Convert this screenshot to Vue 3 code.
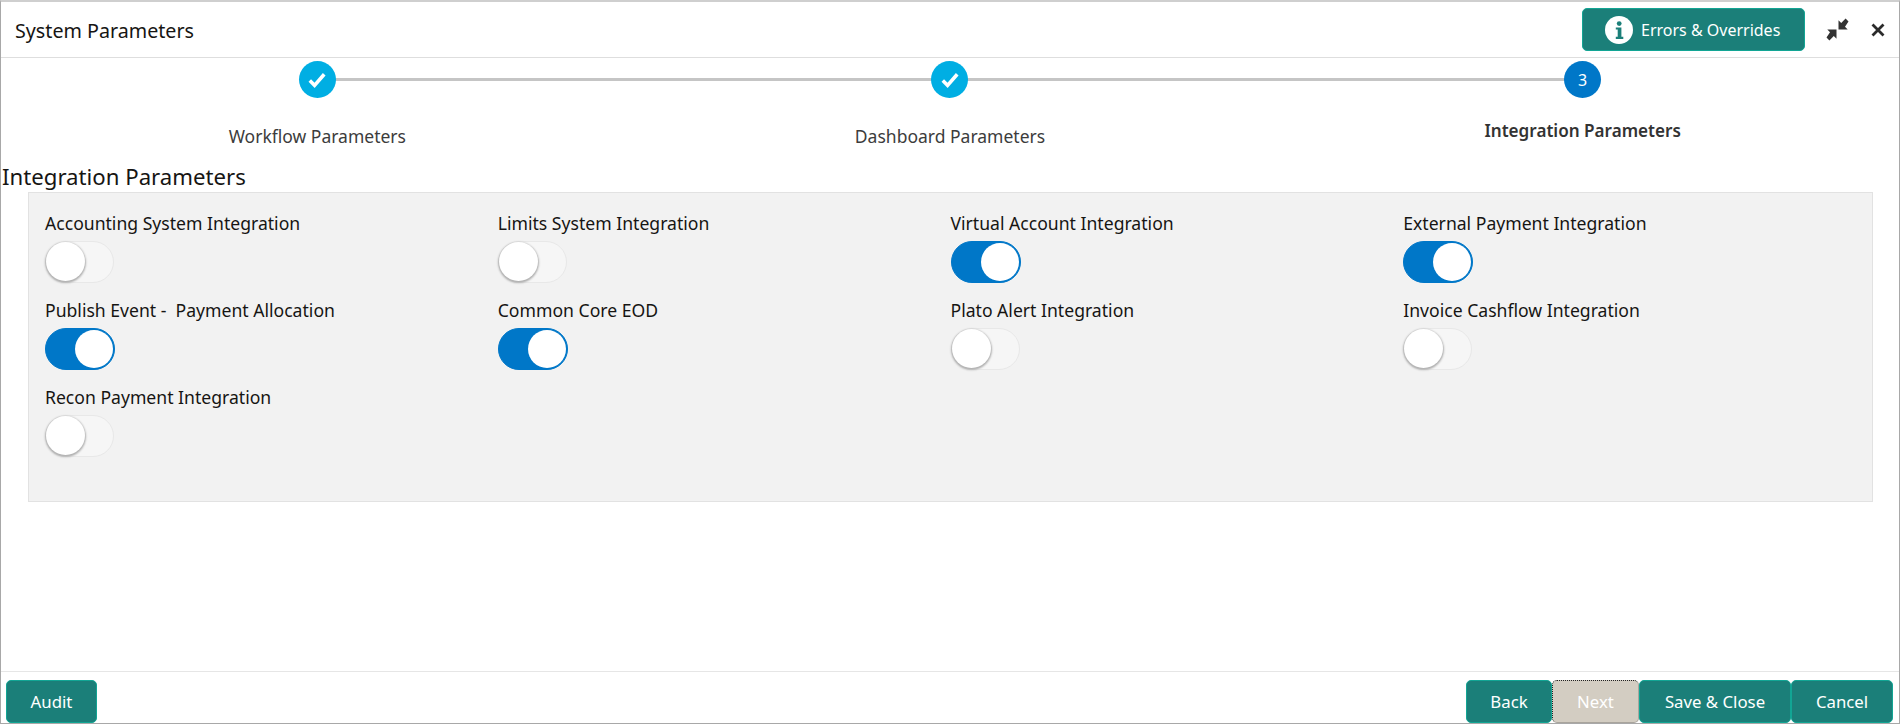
<script setup>
const steps = [
  { label: 'Workflow Parameters', done: true },
  { label: 'Dashboard Parameters', done: true },
  { label: 'Integration Parameters', done: false, num: 3 },
]
const toggles = [
  { label: 'Accounting System Integration', on: false },
  { label: 'Limits System Integration', on: false },
  { label: 'Virtual Account Integration', on: true },
  { label: 'External Payment Integration', on: true },
  { label: 'Publish Event -\u00a0 Payment Allocation', on: true },
  { label: 'Common Core EOD', on: true },
  { label: 'Plato Alert Integration', on: false },
  { label: 'Invoice Cashflow Integration', on: false },
  { label: 'Recon Payment Integration', on: false },
]
</script>

<template>
  <div class="page">
    <header class="head">
      <h1 class="title">System Parameters</h1>
      <div class="head-right">
        <button class="btn errors">
          <svg class="info" viewBox="0 0 28 28">
            <circle cx="14" cy="14" r="14" fill="#fff" />
            <circle cx="14.2" cy="7.6" r="2.4" fill="#1b7f79" />
            <path d="M10.8 11.4h5.6v9.4h1.9v2.2h-7.5v-2.2h1.9v-7.2h-1.9z" fill="#1b7f79" />
          </svg>
          Errors &amp; Overrides
        </button>
        <svg class="shrink" viewBox="0 0 23 23">
          <path d="M22.5 3.4 19.6 .5l-4.4 4.4-2.7-2.7v9.2h9.2l-2.7-2.7z" fill="#333" />
          <path d="M.5 19.6l2.9 2.9 4.4-4.4 2.7 2.7v-9.2H1.3L4 14.3z" fill="#333" />
        </svg>
        <svg class="close" viewBox="0 0 14 14">
          <path d="M1.5 1.5l11 11M12.5 1.5l-11 11" stroke="#2b2b2b" stroke-width="2.8" fill="none" />
        </svg>
      </div>
    </header>

    <section class="steps">
      <div v-for="(s, i) in steps" :key="s.label" class="step" :class="{ current: !s.done, linked: i < 2 }">
        <div class="dot" :class="s.done ? 'dot-done' : 'dot-now'">
          <svg v-if="s.done" class="tick" viewBox="0 0 18 16">
            <path d="M2.5 8.5l4.3 4.3L15.5 2.8" stroke="#fff" stroke-width="3.2" fill="none" />
          </svg>
          <span v-else>{{ s.num }}</span>
        </div>
        <div class="step-label">{{ s.label }}</div>
      </div>
    </section>

    <h2 class="section-title">Integration Parameters</h2>

    <section class="panel">
      <div v-for="t in toggles" :key="t.label" class="field">
        <label class="field-label">{{ t.label }}</label>
        <span class="switch" :class="{ on: t.on }"><span class="knob"></span></span>
      </div>
    </section>

    <footer class="foot">
      <button class="btn audit">Audit</button>
      <div class="foot-right">
        <button class="btn back">Back</button>
        <button class="btn next">Next</button>
        <button class="btn save">Save &amp; Close</button>
        <button class="btn cancel">Cancel</button>
      </div>
    </footer>
  </div>
</template>

<style scoped>
.page {
  width: 1900px;
  height: 724px;
  box-sizing: border-box;
  border-top: 2px solid #cfcfcf;
  border-left: 1px solid #a8a8a8;
  border-right: 1px solid #a8a8a8;
  border-bottom: 1px solid #a8a8a8;
  display: flex;
  flex-direction: column;
  font-family: "Noto Sans", "Open Sans", sans-serif;
  color: #161513;
  background: #fff;
  overflow: hidden;
}
.head {
  height: 56px;
  flex: none;
  box-sizing: border-box;
  border-bottom: 1px solid #dedede;
  display: flex;
  align-items: center;
  justify-content: space-between;
  padding-left: 14px;
}
.title {
  margin: 0;
  padding-top: 2px;
  font-size: 19.7px;
  font-weight: 400;
}
.head-right {
  display: flex;
  align-items: center;
}
.btn {
  font-family: inherit;
  color: #fff;
  background: #1b7f79;
  border: 1px solid #12a594;
  border-radius: 5px;
  font-size: 16.8px;
  height: 43px;
  padding: 0;
  box-sizing: border-box;
}
.errors {
  width: 223px;
  display: flex;
  align-items: center;
  gap: 8px;
  padding-left: 22px;
  font-size: 16px;
}
.info {
  width: 28px;
  height: 28px;
}
.shrink {
  width: 23px;
  height: 23px;
  margin-left: 21px;
}
.close {
  width: 14px;
  height: 14px;
  margin-left: 22px;
  margin-right: 14px;
}
.steps {
  flex: none;
  display: grid;
  grid-template-columns: repeat(3, 1fr);
  height: 105px;
}
.step {
  position: relative;
  display: flex;
  flex-direction: column;
  align-items: center;
  padding-top: 3px;
}
.step.linked::after {
  content: "";
  position: absolute;
  left: 50%;
  width: 100%;
  top: 20px;
  height: 3px;
  background: #c5c5c5;
}
.dot {
  position: relative;
  z-index: 1;
  width: 37px;
  height: 37px;
  border-radius: 50%;
  display: flex;
  align-items: center;
  justify-content: center;
  color: #fff;
  font-size: 16px;
}
.dot-done { background: #00aee3; }
.dot-now { background: #0077c8; }
.tick {
  width: 20px;
  height: 18px;
}
.step-label {
  margin-top: 26px;
  font-size: 17.5px;
  color: #3c3c3c;
  line-height: 24px;
}
.current .step-label {
  margin-top: 21px;
  font-weight: 600;
  font-size: 17.1px;
  color: #333;
}
.section-title {
  margin: 0;
  font-size: 22.2px;
  font-weight: 400;
  line-height: 28px;
  padding-left: 1px;
  height: 29px;
  flex: none;
}
.panel {
  flex: none;
  width: 1845px;
  height: 310px;
  margin-left: 27px;
  box-sizing: border-box;
  background: #f2f2f2;
  border: 1px solid #e2e2e2;
  padding: 18px 16px 0 16px;
  display: grid;
  grid-template-columns: repeat(4, 452.75px);
  grid-auto-rows: 87px;
}
.field {
  display: flex;
  flex-direction: column;
  align-items: flex-start;
}
.field-label {
  font-size: 17.6px;
  line-height: 24px;
  height: 24px;
  margin-bottom: 6px;
}
.switch {
  position: relative;
  display: block;
  width: 69px;
  height: 42px;
  box-sizing: border-box;
  border-radius: 21px;
  background: #f6f6f6;
  border: 1px solid #e8e8e8;
}
.knob {
  position: absolute;
  left: 0;
  top: 0;
  width: 39px;
  height: 39px;
  border-radius: 50%;
  background: #fff;
  box-shadow: 0 1px 2px 1px #b0b0b0;
}
.switch.on {
  width: 70px;
  background: #0077c8;
  border-color: #0077c8;
}
.on .knob {
  left: 29px;
  top: 1px;
  width: 38px;
  height: 38px;
  box-shadow: none;
}
.foot {
  margin-top: auto;
  height: 52px;
  flex: none;
  box-sizing: border-box;
  border-top: 1px solid #e6e6e6;
  display: flex;
  justify-content: space-between;
  align-items: flex-end;
  padding-left: 5px;
  padding-right: 6px;
}
.foot-right {
  display: flex;
}
.audit { width: 91px; }
.back { width: 86px; }
.next {
  width: 87px;
  background: #d3cdc2;
  border-color: #a9a59d;
  border-top: 1px dotted #222;
  border-left: 1px dotted #222;
}
.save { width: 152px; }
.cancel { width: 102px; }
</style>
